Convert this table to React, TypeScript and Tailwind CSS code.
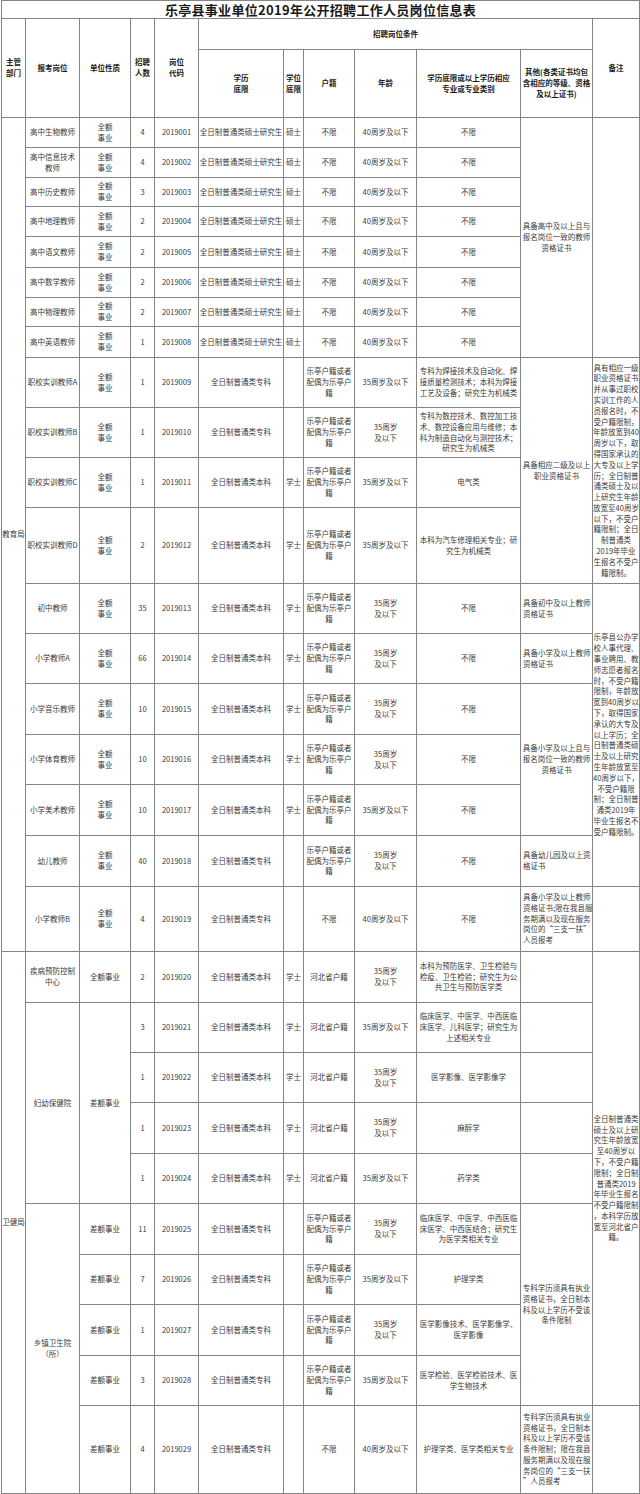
import React from 'react';
import clsx from 'clsx';

type Cell = string | { t: string; rs?: number; cs?: number; left?: boolean };
type Row = { h: number; cells: Cell[] };

const QR = '全额\n事业';
const SS = '全日制普通类硕士研究生';
const BK = '全日制普通类本科';
const ZK = '全日制普通类专科';
const LT = '乐亭户籍或者\n配偶为乐亭户\n籍';
const A40 = '40周岁及以下';
const A35 = '35周岁及以下';
const A35b = '35周岁\n及以下';
const HB = '河北省户籍';

const remarkVocational =
  '具有相应一级\n职业资格证书\n并从事过职校\n实训工作的人\n员报名时，不\n受户籍限制，\n年龄放宽到40\n周岁以下，取\n得国家承认的\n大专及以上学\n历；全日制普\n通类硕士及以\n上研究生年龄\n放宽至40周岁\n以下，不受户\n籍限制；全日\n制普通类\n2019年毕业\n生报名不受户\n籍限制。';

const remarkPrimary =
  '乐亭县公办学\n校人事代理、\n事业聘用、教\n师志愿者报名\n时，不受户籍\n限制，年龄放\n宽到40周岁以\n下，取得国家\n承认的大专及\n以上学历；全\n日制普通类硕\n士及以上研究\n生年龄放宽至\n40周岁以下，\n不受户籍限\n制；全日制普\n通类2019年\n毕业生报名不\n受户籍限制。';

const remarkHealth =
  '全日制普通类\n硕士及以上研\n究生年龄放宽\n至40周岁以\n下，不受户籍\n限制；全日制\n普通类2019\n年毕业生报名\n不受户籍限制\n，本科学历放\n宽至河北省户\n籍。';

const rows: Row[] = [
  {
    h: 30,
    cells: [
      { t: '教育局', rs: 19 },
      '高中生物教师', QR, '4', '2019001', SS, '硕士', '不限', A40, '不限',
      { t: '具备高中及以上且与\n报名岗位一致的教师\n资格证书', rs: 8 },
      { t: '', rs: 8 },
    ],
  },
  { h: 30, cells: ['高中信息技术\n教师', QR, '4', '2019002', SS, '硕士', '不限', A40, '不限'] },
  { h: 29, cells: ['高中历史教师', QR, '3', '2019003', SS, '硕士', '不限', A40, '不限'] },
  { h: 30, cells: ['高中地理教师', QR, '2', '2019004', SS, '硕士', '不限', A40, '不限'] },
  { h: 31, cells: ['高中语文教师', QR, '2', '2019005', SS, '硕士', '不限', A40, '不限'] },
  { h: 30, cells: ['高中数学教师', QR, '2', '2019006', SS, '硕士', '不限', A40, '不限'] },
  { h: 29, cells: ['高中物理教师', QR, '2', '2019007', SS, '硕士', '不限', A40, '不限'] },
  { h: 31, cells: ['高中英语教师', QR, '1', '2019008', SS, '硕士', '不限', A40, '不限'] },
  {
    h: 50,
    cells: [
      '职校实训教师A', QR, '1', '2019009', ZK, '', LT, A35,
      '专科为焊接技术及自动化、焊\n接质量检测技术；本科为焊接\n工艺及设备；研究生为机械类',
      { t: '具备相应二级及以上\n职业资格证书', rs: 4 },
      { t: remarkVocational, rs: 4 },
    ],
  },
  {
    h: 50,
    cells: [
      '职校实训教师B', QR, '1', '2019010', ZK, '', LT, A35b,
      '专科为数控技术、数控加工技\n术、数控设备应用与维修；本\n科为制造自动化与测控技术；\n研究生为机械类',
    ],
  },
  { h: 50, cells: ['职校实训教师C', QR, '1', '2019011', BK, '学士', LT, A35, '电气类'] },
  {
    h: 76,
    cells: ['职校实训教师D', QR, '2', '2019012', BK, '学士', LT, A35, '本科为汽车修理相关专业；研\n究生为机械类'],
  },
  {
    h: 50,
    cells: [
      '初中教师', QR, '35', '2019013', BK, '学士', LT, A35b, '不限',
      { t: '具备初中及以上教师\n资格证书', left: true },
      { t: remarkPrimary, rs: 6 },
    ],
  },
  {
    h: 50,
    cells: ['小学教师A', QR, '66', '2019014', BK, '学士', LT, A35b, '不限', { t: '具备小学及以上教师\n资格证书', left: true }],
  },
  {
    h: 51,
    cells: [
      '小学音乐教师', QR, '10', '2019015', BK, '学士', LT, A35b, '不限',
      { t: '具备小学及以上且与\n报名岗位一致的教师\n资格证书', rs: 3 },
    ],
  },
  { h: 50, cells: ['小学体育教师', QR, '10', '2019016', BK, '学士', LT, A35b, '不限'] },
  { h: 51, cells: ['小学美术教师', QR, '10', '2019017', BK, '学士', LT, A35, '不限'] },
  {
    h: 51,
    cells: ['幼儿教师', QR, '40', '2019018', ZK, '', LT, A35b, '不限', { t: '具备幼儿园及以上资\n格证书', left: true }],
  },
  {
    h: 65,
    cells: [
      '小学教师B', QR, '4', '2019019', ZK, '', '不限', A40, '不限',
      { t: '具备小学及以上教师\n资格证书;限在我县服\n务期满以及现在服务\n岗位的“三支一扶”\n人员报考', left: true },
      '',
    ],
  },
  {
    h: 51,
    cells: [
      { t: '卫健局', rs: 10 },
      '疾病预防控制\n中心', '全额事业', '2', '2019020', BK, '学士', HB, A35b,
      '本科为预防医学、卫生检验与\n检疫、卫生检验；研究生为公\n共卫生与预防医学类',
      '',
      { t: remarkHealth, rs: 9 },
    ],
  },
  {
    h: 50,
    cells: [
      { t: '妇幼保健院', rs: 4 },
      { t: '差额事业', rs: 4 },
      '3', '2019021', BK, '学士', HB, A35,
      '临床医学、中医学、中西医临\n床医学、儿科医学；研究生为\n上述相关专业',
      '',
    ],
  },
  { h: 50, cells: ['1', '2019022', BK, '学士', HB, A35b, '医学影像、医学影像学', ''] },
  { h: 51, cells: ['1', '2019023', BK, '学士', HB, A35b, '麻醉学', ''] },
  { h: 50, cells: ['1', '2019024', BK, '学士', HB, A35, '药学类', ''] },
  {
    h: 51,
    cells: [
      { t: '乡镇卫生院\n（所）', rs: 5 },
      '差额事业', '11', '2019025', ZK, '', LT, A35b,
      '临床医学、中医学、中西医临\n床医学、中西医结合；研究生\n为医学类相关专业',
      { t: '专科学历须具有执业\n资格证书，全日制本\n科及以上学历不受该\n条件限制', rs: 4 },
    ],
  },
  { h: 50, cells: ['差额事业', '7', '2019026', ZK, '', LT, A35, '护理学类'] },
  { h: 51, cells: ['差额事业', '1', '2019027', ZK, '', LT, A35b, '医学影像技术、医学影像学、\n医学影像'] },
  { h: 50, cells: ['差额事业', '3', '2019028', ZK, '', LT, A35, '医学检验、医学检验技术、医\n学生物技术'] },
  {
    h: 88,
    cells: [
      '差额事业', '4', '2019029', ZK, '', '不限', A40, '护理学类、医学类相关专业',
      {
        t: '专科学历须具有执业\n资格证书，全日制本\n科及以上学历不受该\n条件限制；限在我县\n服务期满以及现在服\n务岗位的“三支一扶\n”人员报考',
        left: true,
      },
      '',
    ],
  },
];

const widths = [24, 54, 51, 24, 44, 85, 20, 51, 62, 104, 72, 47];

function Td({ cell, head }: { cell: Cell; head?: boolean }) {
  const c = typeof cell === 'string' ? { t: cell } : cell;
  return (
    <td
      rowSpan={c.rs}
      colSpan={c.cs}
      className={clsx(
        'border border-[#858585] p-0 align-middle whitespace-pre leading-[10.8px]',
        c.left ? 'text-left pl-[2px]' : 'text-center',
        head ? 'font-bold text-[#1c1c1c]' : 'text-[#3a3a3a]'
      )}
    >
      {c.t}
    </td>
  );
}

export default function App() {
  return (
    <div className="w-[640px] bg-white pl-[1px] font-['Noto_Sans_CJK_SC',sans-serif] text-[7.5px]">
      <table className="w-[638px] table-fixed border-collapse">
        <colgroup>
          {widths.map((w, i) => (
            <col key={i} style={{ width: w }} />
          ))}
        </colgroup>
        <tbody>
          <tr className="h-[18px]">
            <td
              colSpan={12}
              className="border border-[#858585] p-0 text-center align-middle text-[13px] leading-[16px] font-bold tracking-[0.3px] text-[#1a1a1a]"
            >
              乐亭县事业单位2019年公开招聘工作人员岗位信息表
            </td>
          </tr>
          <tr className="h-[31px]">
            <Td head cell={{ t: '主管\n部门', rs: 2 }} />
            <Td head cell={{ t: '报考岗位', rs: 2 }} />
            <Td head cell={{ t: '单位性质', rs: 2 }} />
            <Td head cell={{ t: '招聘\n人数', rs: 2 }} />
            <Td head cell={{ t: '岗位\n代码', rs: 2 }} />
            <Td head cell={{ t: '招聘岗位条件', cs: 6 }} />
            <Td head cell={{ t: '备注', rs: 2 }} />
          </tr>
          <tr className="h-[68px]">
            <Td head cell={'学历\n底限'} />
            <Td head cell={'学位\n底限'} />
            <Td head cell="户籍" />
            <Td head cell="年龄" />
            <Td head cell={'学历底限或以上学历相应\n专业或专业类别'} />
            <Td head cell={'其他(各类证书均包\n含相应的等级、资格\n及以上证书)'} />
          </tr>
          {rows.map((r, i) => (
            <tr key={i} style={{ height: r.h }}>
              {r.cells.map((c, j) => (
                <Td key={j} cell={c} />
              ))}
            </tr>
          ))}
        </tbody>
      </table>
    </div>
  );
}
